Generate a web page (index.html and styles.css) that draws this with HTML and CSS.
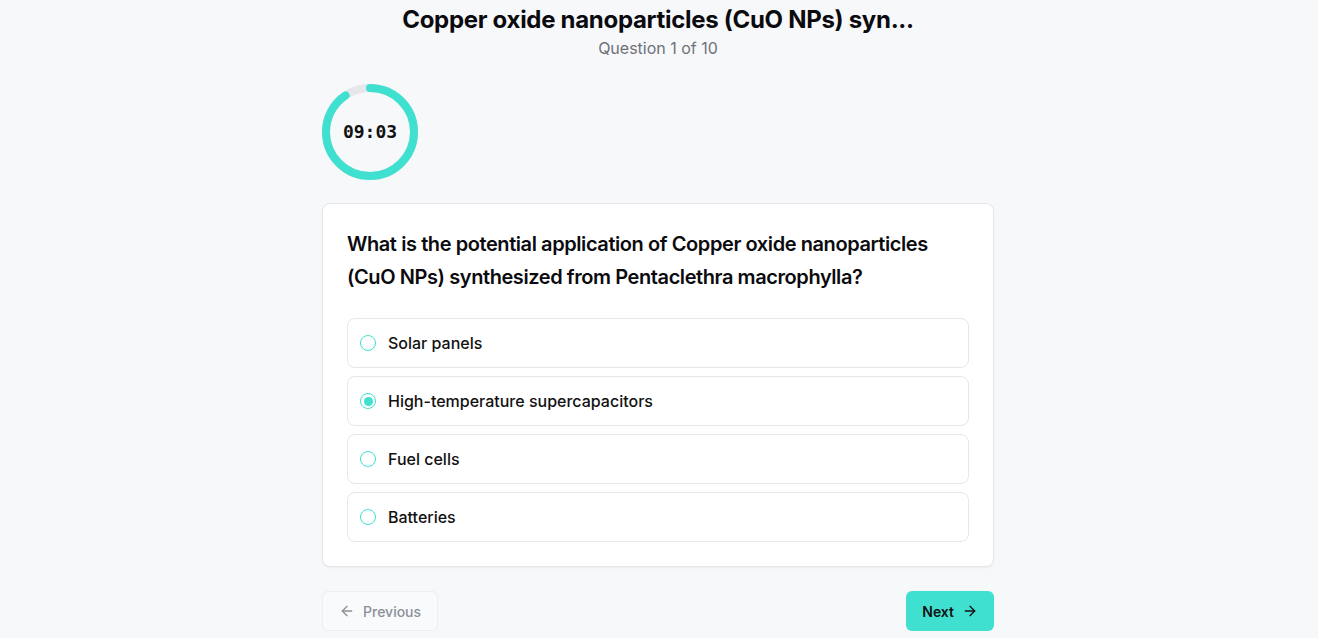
FILE: index.html
```html
<!DOCTYPE html>
<html lang="en">
<head>
<meta charset="utf-8">
<title>Quiz</title>
<link rel="stylesheet" href="styles.css">
</head>
<body>
<main class="quiz">
  <header class="quiz-header">
    <h1 class="quiz-title">Copper oxide nanoparticles (CuO NPs) syn...</h1>
    <p class="quiz-progress">Question 1 of 10</p>
  </header>

  <div class="timer">
    <svg class="timer-ring" width="96" height="96" viewBox="0 0 96 96">
      <circle cx="48" cy="48" r="44" fill="none" stroke="#e5e7eb" stroke-width="8"/>
      <circle cx="48" cy="48" r="44" fill="none" stroke="#40e0d0" stroke-width="8" stroke-linecap="round" stroke-dasharray="250.2 276.5" transform="rotate(-90 48 48)"/>
    </svg>
    <span class="timer-text">09:03</span>
  </div>

  <section class="card">
    <h2 class="question">What is the potential application of Copper oxide nanoparticles (CuO NPs) synthesized from Pentaclethra macrophylla?</h2>
    <div class="options">
      <label class="option"><span class="radio"></span><span class="option-text">Solar panels</span></label>
      <label class="option"><span class="radio checked"></span><span class="option-text">High-temperature supercapacitors</span></label>
      <label class="option"><span class="radio"></span><span class="option-text">Fuel cells</span></label>
      <label class="option"><span class="radio"></span><span class="option-text">Batteries</span></label>
    </div>
  </section>

  <nav class="nav">
    <button class="btn btn-prev" disabled>
      <svg width="16" height="16" viewBox="0 0 24 24" fill="none" stroke="currentColor" stroke-width="2" stroke-linecap="round" stroke-linejoin="round"><path d="m12 19-7-7 7-7"/><path d="M19 12H5"/></svg>
      Previous
    </button>
    <button class="btn btn-next">
      Next
      <svg width="16" height="16" viewBox="0 0 24 24" fill="none" stroke="currentColor" stroke-width="2" stroke-linecap="round" stroke-linejoin="round"><path d="M5 12h14"/><path d="m12 5 7 7-7 7"/></svg>
    </button>
  </nav>
</main>
</body>
</html>
```
FILE: styles.css
```css
* { box-sizing: border-box; }
html, body { margin: 0; padding: 0; }
body {
  background: #f7f8fa;
  font-family: Inter, "Noto Sans", sans-serif;
  color: #111827;
}
.quiz {
  width: 672px;
  margin-left: calc(50% - 337px);
  padding-top: 4px;
}
.quiz-header { text-align: center; }
.quiz-title {
  margin: 0;
  font-family: Inter, sans-serif;
  font-weight: 700;
  font-size: 24px;
  line-height: 32px;
  letter-spacing: -0.3px;
  color: #0b0b0f;
}
.quiz-progress {
  margin: 0;
  font-size: 16px;
  line-height: 24px;
  color: #6e7178;
}
.timer {
  position: relative;
  width: 96px;
  height: 96px;
  margin-top: 24px;
  display: flex;
  align-items: center;
  justify-content: center;
}
.timer-ring { position: absolute; inset: 0; }
.timer-text {
  position: relative;
  top: -1px;
  font-family: "DejaVu Sans Mono", monospace;
  font-weight: 700;
  font-size: 18px;
  color: #111;
}
.card {
  margin-top: 23px;
  background: #fff;
  border: 1px solid #e5e7eb;
  border-radius: 8px;
  box-shadow: 0 1px 2px rgba(0,0,0,0.05);
  padding: 24px;
}
.question {
  margin: 0 0 24px;
  font-size: 20px;
  font-weight: 600;
  line-height: 33px;
  color: #0b0b0f;
  letter-spacing: -0.42px;
}
.options { display: flex; flex-direction: column; gap: 8px; }
.option {
  display: flex;
  align-items: center;
  gap: 12px;
  padding: 12px;
  border: 1px solid #e5e7eb;
  border-radius: 8px;
  background: #fff;
}
.radio {
  width: 16px;
  height: 16px;
  border: 1.5px solid #40e0d0;
  border-radius: 50%;
  flex: none;
  display: flex;
  align-items: center;
  justify-content: center;
}
.radio.checked::after {
  content: "";
  width: 9px;
  height: 9px;
  border-radius: 50%;
  background: #40e0d0;
}
.option-text {
  font-size: 16px;
  line-height: 24px;
  font-weight: 500;
  color: #111;
}
.nav {
  margin-top: 24px;
  display: flex;
  justify-content: space-between;
}
.btn {
  display: inline-flex;
  align-items: center;
  gap: 8px;
  height: 40px;
  padding: 0 16px;
  border-radius: 6px;
  font-family: Inter, sans-serif;
  font-size: 14px;
  font-weight: 500;
}
.btn-prev {
  background: #f9fafb;
  border: 1px solid #eceef1;
  color: #8b9099;
}
.btn-next {
  background: #40e0d0;
  border: none;
  color: #111;
  font-weight: 600;
}
```
